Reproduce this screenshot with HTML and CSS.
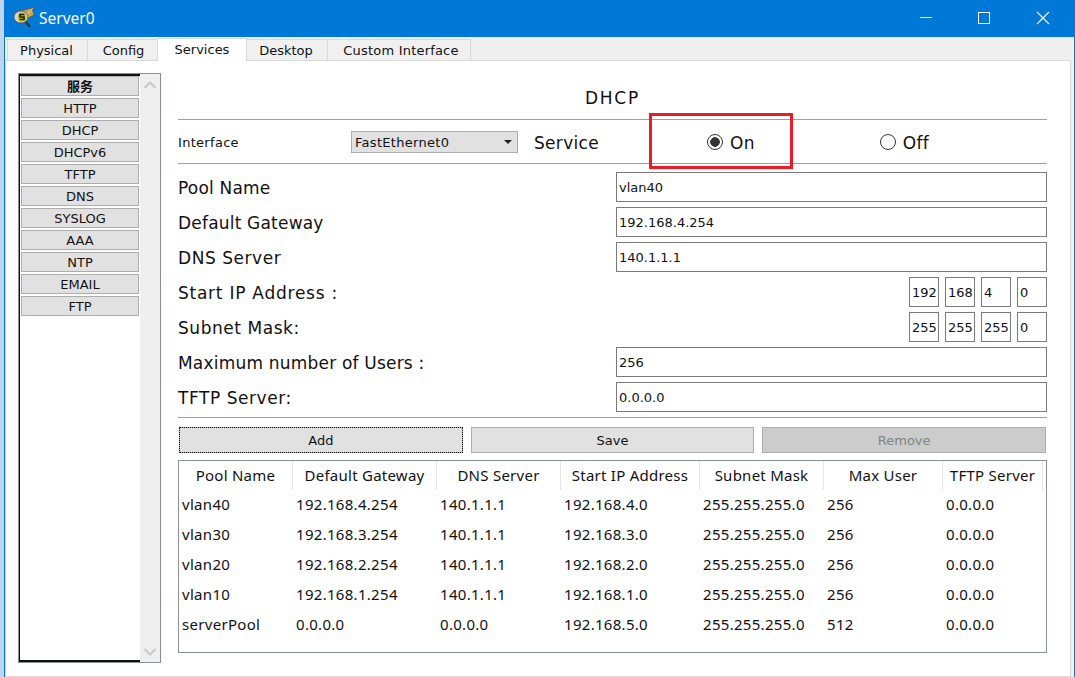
FILE: index.html
```html
<!DOCTYPE html>
<html lang="en">
<head>
<meta charset="utf-8">
<title>Server0</title>
<link rel="stylesheet" href="styles.css">
</head>
<body>
<div class="window">
  <header class="titlebar">
    <svg class="app-icon" width="24" height="24" viewBox="0 0 24 24">
      <path d="M13 16l5 6" stroke="#333" stroke-width="2" fill="none"/>
      <path d="M8 6l12-3 2 7-10 5z" fill="#c9a958" stroke="#6b5a2a" stroke-width=".8"/>
      <path d="M9 6l7 3 5-6" fill="none" stroke="#f0dc9c" stroke-width=".8"/>
      <ellipse cx="9" cy="12" rx="7" ry="6" fill="#d8d8d0" stroke="#666" stroke-width="1"/>
      <circle cx="10" cy="12" r="4.500" fill="#c8c000"/>
      <path d="M12.500 9.500h-4.500v2.500h4v2.500h-4.500" fill="none" stroke="#1d1d00" stroke-width="1.500"/>
    </svg>
    <span class="title">Server0</span>
    <div class="controls">
      <svg width="14" height="14" viewBox="0 0 14 14"><path d="M2 6.500h12" stroke="#fff" stroke-width="1" fill="none"/></svg>
      <svg width="14" height="14" viewBox="0 0 14 14"><rect x="1.500" y="1.500" width="11" height="11" stroke="#fff" stroke-width="1" fill="none"/></svg>
      <svg width="14" height="14" viewBox="0 0 14 14"><path d="M1 1l12 12M13 1L1 13" stroke="#fff" stroke-width="1.100" fill="none"/></svg>
    </div>
  </header>

  <nav class="tabs">
    <div class="tab tab-physical">Physical</div>
    <div class="tab tab-config">Config</div>
    <div class="tab tab-services active">Services</div>
    <div class="tab tab-desktop">Desktop</div>
    <div class="tab tab-custom">Custom Interface</div>
  </nav>

  <main class="panel">
    <aside class="sidebar">
      <div class="list">
        <div class="item item-head">服务</div>
        <div class="item">HTTP</div>
        <div class="item">DHCP</div>
        <div class="item">DHCPv6</div>
        <div class="item">TFTP</div>
        <div class="item">DNS</div>
        <div class="item">SYSLOG</div>
        <div class="item">AAA</div>
        <div class="item">NTP</div>
        <div class="item">EMAIL</div>
        <div class="item">FTP</div>
      </div>
      <div class="scrollbar">
        <svg width="14" height="8" viewBox="0 0 14 8"><path d="M1.500 7L7 1.500 12.500 7" fill="none" stroke="#c8c8c8" stroke-width="2"/></svg>
        <svg width="14" height="8" viewBox="0 0 14 8"><path d="M1.500 1L7 6.500 12.500 1" fill="none" stroke="#c8c8c8" stroke-width="2"/></svg>
      </div>
    </aside>

    <section class="content">
      <h1 class="heading">DHCP</h1>
      <div class="service-row">
        <span class="iface-label">Interface</span>
        <div class="select"><span>FastEthernet0</span><i class="caret"></i></div>
        <span class="service-label">Service</span>
        <div class="radio-on"><i class="radio checked"></i><span>On</span></div>
        <div class="radio-off"><i class="radio"></i><span>Off</span></div>
      </div>
      <div class="fields">
        <div class="field"><label>Pool Name</label><div class="input">vlan40</div></div>
        <div class="field"><label>Default Gateway</label><div class="input">192.168.4.254</div></div>
        <div class="field"><label class="loose">DNS Server</label><div class="input">140.1.1.1</div></div>
        <div class="field"><label class="looser">Start IP Address :</label>
          <div class="octets"><div class="octet">192</div><div class="octet">168</div><div class="octet">4</div><div class="octet">0</div></div></div>
        <div class="field"><label class="loose">Subnet Mask:</label>
          <div class="octets"><div class="octet">255</div><div class="octet">255</div><div class="octet">255</div><div class="octet">0</div></div></div>
        <div class="field"><label>Maximum number of Users :</label><div class="input">256</div></div>
        <div class="field"><label class="loose">TFTP Server:</label><div class="input">0.0.0.0</div></div>
      </div>
      <div class="actions">
        <div class="btn btn-add">Add</div>
        <div class="btn">Save</div>
        <div class="btn btn-disabled">Remove</div>
      </div>
      <div class="table-box">
        <table class="pools">
          <colgroup>
            <col class="c1"><col class="c2"><col class="c3"><col class="c4"><col class="c5"><col class="c6"><col class="c7"><col>
          </colgroup>
          <thead>
            <tr><th>Pool Name</th><th>Default Gateway</th><th>DNS Server</th><th>Start IP Address</th><th>Subnet Mask</th><th>Max User</th><th>TFTP Server</th><th class="filler"></th></tr>
          </thead>
          <tbody>
            <tr><td>vlan40</td><td>192.168.4.254</td><td>140.1.1.1</td><td>192.168.4.0</td><td>255.255.255.0</td><td>256</td><td>0.0.0.0</td><td></td></tr>
            <tr><td>vlan30</td><td>192.168.3.254</td><td>140.1.1.1</td><td>192.168.3.0</td><td>255.255.255.0</td><td>256</td><td>0.0.0.0</td><td></td></tr>
            <tr><td>vlan20</td><td>192.168.2.254</td><td>140.1.1.1</td><td>192.168.2.0</td><td>255.255.255.0</td><td>256</td><td>0.0.0.0</td><td></td></tr>
            <tr><td>vlan10</td><td>192.168.1.254</td><td>140.1.1.1</td><td>192.168.1.0</td><td>255.255.255.0</td><td>256</td><td>0.0.0.0</td><td></td></tr>
            <tr><td>serverPool</td><td>0.0.0.0</td><td>0.0.0.0</td><td>192.168.5.0</td><td>255.255.255.0</td><td>512</td><td>0.0.0.0</td><td></td></tr>
          </tbody>
        </table>
      </div>
    </section>
  </main>
  <div class="annotation"></div>
</div>
</body>
</html>
```

FILE: styles.css
```css
* { box-sizing: border-box; }
html, body { margin: 0; padding: 0; }
body {
  width: 1075px;
  height: 677px;
  overflow: hidden;
  background: #fff;
  font-family: "DejaVu Sans", sans-serif;
  color: #111;
}
.window {
  position: relative;
  width: 1075px;
  height: 677px;
  display: flex;
  flex-direction: column;
  background: #efefef;
  border-left: 5px solid #0078d7;
  border-right: 1px solid #0078d7;
}
.window::before {
  content: "";
  position: absolute;
  left: -5px;
  top: 0;
  bottom: 0;
  width: 4px;
  background: #c0d4ee;
}
.titlebar {
  flex: none;
  height: 37px;
  margin-left: -1px;
  margin-right: -1px;
  background: #0078d7;
  display: flex;
  align-items: center;
  padding-left: 8px;
  color: #fff;
}
.app-icon { flex: none; margin-top: -3px; }
.title {
  margin-left: 3px;
  margin-top: -1px;
  font: 15.500px "Noto Sans", sans-serif;
  color: #fff;
}
.controls {
  margin-left: auto;
  margin-top: -1px;
  display: flex;
  gap: 45px;
  padding-right: 25px;
}
.tabs {
  flex: none;
  height: 23px;
  display: flex;
  align-items: flex-end;
  padding-left: 2px;
  font: 13px "DejaVu Sans", sans-serif;
}
.tab {
  height: 21px;
  line-height: 21px;
  text-align: center;
  background: #f0f0f0;
  border: 1px solid #d9d9d9;
  border-bottom: 0;
  border-left: 0;
  color: #111;
}
.tab-physical { width: 81px; border-left: 1px solid #d9d9d9; padding-right: 2px; }
.tab-config { width: 70px; padding-left: 2px; }
.tab-services {
  width: 89px;
  height: 23px;
  line-height: 21px;
  background: #fff;
  margin-bottom: -1px;
  position: relative;
  z-index: 1;
}
.tab-desktop { width: 81px; padding-right: 2px; }
.tab-custom { width: 143px; letter-spacing: .2px; padding-left: 4px; }
.panel {
  flex: 1;
  min-height: 0;
  margin-right: 3px;
  background: #fff;
  border: 1px solid #d9d9d9;
  display: flex;
  padding: 12px 22px 10px 12px;
}
.sidebar {
  flex: none;
  width: 143px;
  height: 590px;
  border: 1px solid #8a8f94;
  display: flex;
}
.list {
  width: 121px;
  border-top: 2px solid #111;
  border-bottom: 2px solid #111;
  border-left: 1px solid #111;
  display: flex;
  flex-direction: column;
  gap: 2px;
  padding-left: 1px;
  font: 13px "DejaVu Sans", sans-serif;
}
.item {
  flex: none;
  width: 118px;
  height: 20px;
  line-height: 20px;
  text-align: center;
  background: #e1e1e1;
  border: 1px solid #adadad;
  color: #111;
}
.item-head { font-weight: 700; line-height: 18px; font-family: "Noto Sans CJK SC", sans-serif; }
.scrollbar {
  flex: 1;
  background: #efefef;
  display: flex;
  flex-direction: column;
  justify-content: space-between;
  align-items: center;
  padding: 7px 0 6px;
}
.content {
  flex: none;
  width: 869px;
  margin-left: 17px;
  display: flex;
  flex-direction: column;
}
.heading {
  margin: 0;
  height: 47px;
  border-bottom: 1px solid #a0a0a0;
  font: 400 17px/50px "DejaVu Sans", sans-serif;
  text-align: center;
  letter-spacing: 1.800px;
  color: #111;
}
.service-row {
  height: 44px;
  border-bottom: 1px solid #a0a0a0;
  display: flex;
  align-items: center;
}
.iface-label { width: 173px; font-size: 13px; letter-spacing: .3px; margin-top: 1px; }
.select {
  width: 167px;
  height: 22px;
  background: #e1e1e1;
  border: 1px solid #adadad;
  font: 13px/20px "DejaVu Sans", sans-serif;
  letter-spacing: .3px;
  padding-left: 3px;
  display: flex;
  align-items: center;
  justify-content: space-between;
  padding-right: 5px;
}
.select span { margin-top: 2px; }
.caret {
  width: 0;
  height: 0;
  border: 4px solid transparent;
  border-top-color: #222;
  border-bottom: 0;
}
.service-label { margin-left: 16px; width: 173px; font-size: 17px; letter-spacing: .3px; margin-top: 2px; }
.radio-on, .radio-off { display: flex; align-items: center; gap: 7px; font-size: 17px; letter-spacing: .3px; }
.radio-on span, .radio-off span { margin-top: 2px; }
.radio-off { margin-left: 125px; }
.radio {
  display: block;
  width: 16px;
  height: 16px;
  border: 1px solid #333;
  border-radius: 50%;
  background: #fff;
}
.radio.checked { background: radial-gradient(circle, #333 0 4.500px, #fff 5px); }
.fields {
  display: flex;
  flex-direction: column;
  gap: 5px;
  padding: 8px 0 5px;
  border-bottom: 1px solid #a0a0a0;
}
.field {
  height: 30px;
  display: flex;
  align-items: center;
  justify-content: space-between;
}
.field label { font-size: 17px; letter-spacing: .2px; margin-top: 1px; }
.field label.loose { letter-spacing: .55px; }
.field label.looser { letter-spacing: .75px; }
.input {
  width: 431px;
  height: 30px;
  border: 1px solid #7a7a7a;
  font-size: 13px;
  line-height: 30px;
  padding-left: 2px;
  background: #fff;
}
.octets { display: flex; gap: 6px; }
.octet {
  width: 30px;
  height: 30px;
  border: 1px solid #7a7a7a;
  font-size: 13px;
  line-height: 30px;
  padding-left: 2px;
}
.actions {
  display: flex;
  gap: 8px;
  padding: 9px 1px 0;
  font: 13px "DejaVu Sans", sans-serif;
}
.btn {
  flex: 1;
  height: 26px;
  line-height: 26px;
  text-align: center;
  background: #e1e1e1;
  border: 1px solid #adadad;
}
.btn-add { outline: 1px dotted #111; outline-offset: -1px; }
.btn-disabled { background: #cccccc; color: #838383; }
.table-box {
  margin-top: 7px;
  height: 193px;
  border: 1px solid #8a8f94;
  font: 15px "Noto Sans", sans-serif;
}
.pools {
  width: 867px;
  table-layout: fixed;
  border-collapse: separate;
  border-spacing: 0;
}
.c1 { width: 114px; }
.c2 { width: 144px; }
.c3 { width: 124px; }
.c4 { width: 139px; }
.c5 { width: 124px; }
.c6 { width: 119px; }
.c7 { width: 100px; }
.pools th {
  height: 29px;
  padding: 0 0 2px;
  font-weight: 400;
  text-align: center;
  letter-spacing: .25px;
  border-right: 1px solid #e5e5e5;
  white-space: nowrap;
}
.pools th.filler { border-right: 0; }
.pools td {
  height: 30px;
  padding: 0 0 2px 3px;
  letter-spacing: .3px;
  white-space: nowrap;
}
.annotation {
  position: absolute;
  left: 644px;
  top: 113px;
  width: 144px;
  height: 56px;
  border: 3px solid #ed1c24;
}
```
